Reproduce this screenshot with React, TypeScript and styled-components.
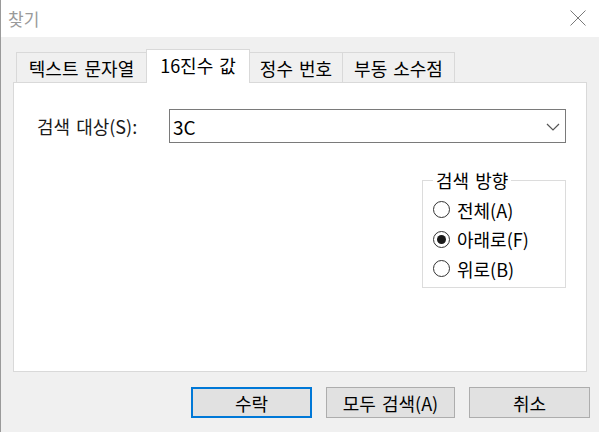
import React, { FC } from "react";
import styled, { createGlobalStyle } from "styled-components";

const GlobalStyle = createGlobalStyle`
  html, body {
    margin: 0;
    padding: 0;
    background: #f0f0f0;
  }
  body {
    font-family: "Noto Sans CJK KR", "Noto Sans", sans-serif;
    color: #000000;
    word-spacing: 2px;
  }
  * {
    box-sizing: border-box;
  }
`;

const Window = styled.div`
  width: 599px;
  height: 432px;
  display: flex;
  flex-direction: column;
  border-left: 1px solid #9a9a9a;
  background: #f0f0f0;
  overflow: hidden;
`;

const TitleBar = styled.div`
  height: 37px;
  flex-shrink: 0;
  background: #ffffff;
  display: flex;
  align-items: center;
  justify-content: space-between;
  padding: 0 13px 0 7px;
`;

const Title = styled.span`
  font-size: 17px;
  color: #9a9a9a;
  line-height: 1;
`;

const CloseButton = styled.div`
  width: 16px;
  height: 16px;
  display: flex;
  margin-top: -2px;
`;

const Body = styled.div`
  flex: 1;
  display: flex;
  flex-direction: column;
  padding: 12px 11px 0 12px;
`;

const TabStrip = styled.div`
  display: flex;
  align-items: flex-end;
  height: 33px;
  padding-left: 3px;
  font-size: 18px;
`;

const Tab = styled.div<{ $width: number; $active?: boolean }>`
  width: ${(p) => p.$width}px;
  height: ${(p) => (p.$active ? 34 : 30)}px;
  margin-bottom: ${(p) => (p.$active ? -1 : 0)}px;
  margin-left: -1px;
  position: relative;
  z-index: ${(p) => (p.$active ? 2 : 1)};
  display: flex;
  align-items: center;
  justify-content: center;
  padding-bottom: ${(p) => (p.$active ? 3 : 0)}px;
  background: ${(p) => (p.$active ? "#ffffff" : "#f0f0f0")};
  border: 1px solid #d9d9d9;
  border-bottom: none;
  white-space: nowrap;
  line-height: 1;
  &:first-child {
    margin-left: 0;
  }
`;

const Panel = styled.div`
  width: 574px;
  height: 290px;
  background: #ffffff;
  border: 1px solid #d9d9d9;
  display: flex;
  flex-direction: column;
  padding: 26px 20px 0 23px;
  font-size: 18px;
`;

const SearchRow = styled.div`
  display: flex;
  align-items: center;
`;

const Label = styled.label`
  width: 132px;
  flex-shrink: 0;
  color: #1a1a1a;
  line-height: 1;
`;

const Combo = styled.div`
  flex: 1;
  height: 34px;
  border: 1px solid #7a7a7a;
  display: flex;
  align-items: center;
  justify-content: space-between;
  padding: 0 5px 0 3px;
  background: #ffffff;
`;

const ComboValue = styled.span`
  font-size: 19px;
  line-height: 1;
`;

const Chevron = styled.svg`
  width: 14px;
  height: 8px;
  margin-top: 1px;
`;

const DirectionGroup = styled.fieldset`
  align-self: flex-end;
  width: 144px;
  height: 118px;
  margin: 27px 0 0 0;
  padding: 0 9px 0 10px;
  border: 1px solid #dcdcdc;
`;

const Legend = styled.legend`
  padding: 0 3px;
  height: 20px;
  line-height: 20px;
  font-size: 18px;
`;

const RadioList = styled.div`
  display: flex;
  flex-direction: column;
  padding-top: 5px;
`;

const RadioRow = styled.label`
  height: 29.5px;
  display: flex;
  align-items: center;
  gap: 7px;
  line-height: 1;
`;

const RadioCircle = styled.span<{ $checked?: boolean }>`
  width: 17px;
  height: 17px;
  border-radius: 50%;
  border: 1px solid #333333;
  display: flex;
  align-items: center;
  justify-content: center;
  flex-shrink: 0;
  &::after {
    content: "";
    width: 9px;
    height: 9px;
    border-radius: 50%;
    background: ${(p) => (p.$checked ? "#1a1a1a" : "transparent")};
  }
`;

const ButtonRow = styled.div`
  display: flex;
  justify-content: flex-end;
  gap: 14px;
  margin: 15px -2px 0 0;
`;

const Button = styled.button<{ $width: number; $primary?: boolean }>`
  width: ${(p) => p.$width}px;
  height: 31px;
  background: #e1e1e1;
  border: ${(p) => (p.$primary ? "2px solid #0078d7" : "1px solid #adadad")};
  font-family: inherit;
  font-size: 18px;
  word-spacing: 2px;
  color: #000000;
  padding: 0;
  display: flex;
  align-items: center;
  justify-content: center;
  line-height: 1;
`;

const tabs = [
  { label: "텍스트 문자열", width: 131 },
  { label: "16진수 값", width: 104, active: true },
  { label: "정수 번호", width: 94 },
  { label: "부동 소수점", width: 113 },
];

const directions = [
  { label: "전체(A)", checked: false },
  { label: "아래로(F)", checked: true },
  { label: "위로(B)", checked: false },
];

const buttons = [
  { label: "수락", width: 121, primary: true },
  { label: "모두 검색(A)", width: 129 },
  { label: "취소", width: 121 },
];

const App: FC = () => {
  return (
    <>
      <GlobalStyle />
      <Window>
        <TitleBar>
          <Title>찾기</Title>
          <CloseButton>
            <svg width="16" height="16" viewBox="0 0 16 16">
              <path d="M0.5 0.5 L15.5 15.5 M15.5 0.5 L0.5 15.5" stroke="#7a7a7a" strokeWidth="1" fill="none" />
            </svg>
          </CloseButton>
        </TitleBar>
        <Body>
          <TabStrip>
            {tabs.map((tab) => (
              <Tab key={tab.label} $width={tab.width} $active={tab.active}>
                {tab.label}
              </Tab>
            ))}
          </TabStrip>
          <Panel>
            <SearchRow>
              <Label>검색 대상(S):</Label>
              <Combo>
                <ComboValue>3C</ComboValue>
                <Chevron viewBox="0 0 14 8">
                  <path d="M1 1 L7 7 L13 1" stroke="#555555" strokeWidth="1.2" fill="none" />
                </Chevron>
              </Combo>
            </SearchRow>
            <DirectionGroup>
              <Legend>검색 방향</Legend>
              <RadioList>
                {directions.map((d) => (
                  <RadioRow key={d.label}>
                    <RadioCircle $checked={d.checked} />
                    {d.label}
                  </RadioRow>
                ))}
              </RadioList>
            </DirectionGroup>
          </Panel>
          <ButtonRow>
            {buttons.map((b) => (
              <Button key={b.label} $width={b.width} $primary={b.primary}>
                {b.label}
              </Button>
            ))}
          </ButtonRow>
        </Body>
      </Window>
    </>
  );
};

export default App;
